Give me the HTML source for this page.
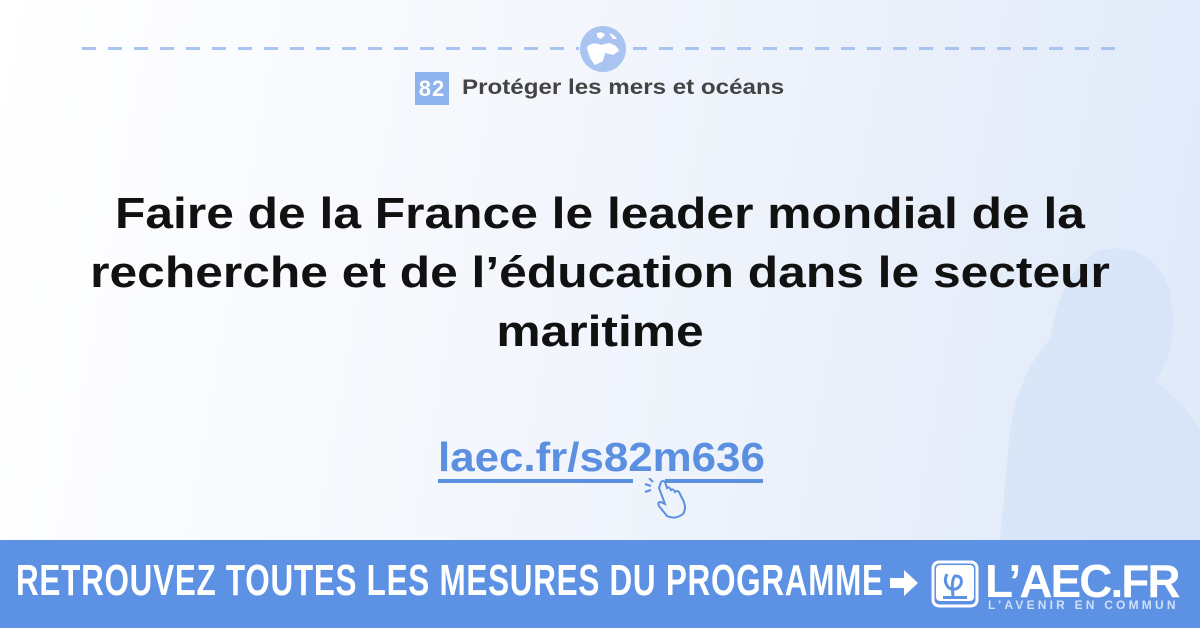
<!DOCTYPE html>
<html><head><meta charset="utf-8"><style>
*{margin:0;padding:0;box-sizing:border-box}
body{width:1200px;height:628px;overflow:hidden;position:relative;font-family:"Liberation Sans",sans-serif;background:linear-gradient(100deg,#ffffff 0%,#f3f6fc 45%,#dfe9f9 100%)}
.dash{position:absolute;top:47px;height:3px;background:repeating-linear-gradient(90deg,#a9c4f0 0 14px,transparent 14px 26px)}
.num{position:absolute;top:72px;left:415px;width:34px;height:33px;background:#8fb3ec;color:#fff;font-weight:bold;font-size:22px;text-align:center;line-height:33px;letter-spacing:1px}
.tt{position:absolute;top:76px;left:462px;font-size:21px;font-weight:bold;color:#444;transform:scaleX(1.15);transform-origin:left;white-space:nowrap}
h1{position:absolute;top:184px;left:0;width:1200px;text-align:center;font-size:44px;line-height:59px;font-weight:bold;color:#111;transform:scaleX(1.13)}
.link{position:absolute;top:434px;left:438px;font-size:41px;font-weight:bold;color:#5b8fe0;transform:scaleX(1.07);transform-origin:left;white-space:nowrap}
.ul{position:absolute;top:479px;height:4px;background:#5b8fe0}
.band{position:absolute;left:0;top:540px;width:1200px;height:88px;background:#5c91e3}
.cta{position:absolute;left:16px;top:556px;color:#fff;font-weight:bold;font-size:44px;transform:scaleX(0.715);transform-origin:left;white-space:nowrap;letter-spacing:1px}
.logo{position:absolute;left:985px;top:554px;color:#fff;font-weight:900;font-size:46px;letter-spacing:-2px;white-space:nowrap}
.sub{position:absolute;left:988px;top:598px;color:#cfe0fb;font-weight:bold;font-size:12px;letter-spacing:3.2px;white-space:nowrap}
</style></head><body>
<svg style="position:absolute;right:0;top:230px" width="260" height="310"><path d="M60 310 L70 200 Q80 140 110 110 Q120 40 160 20 Q210 10 230 60 Q240 120 215 150 Q250 180 260 200 L260 310Z" fill="#d6e3f7" opacity="0.8"/></svg>
<div class="dash" style="left:82px;width:497px"></div>
<div class="dash" style="left:633px;width:492px"></div>
<svg style="position:absolute;left:579px;top:25px" width="48" height="48" viewBox="0 0 48 48"><circle cx="24" cy="24" r="23" fill="#a9c4f0"/><path d="M18 8 Q24 6 26 10 L22 14 L18 12Z M8 22 Q14 16 22 20 L30 18 Q38 20 40 26 L34 30 L26 28 L24 36 L16 40 Q10 34 8 22Z M30 8 Q36 10 38 14 L34 14Z" fill="#fff"/></svg>
<div class="num">82</div><div class="tt">Protéger les mers et océans</div>
<h1>Faire de la France le leader mondial de la<br>recherche et de l’éducation dans le secteur<br>maritime</h1>
<div class="link">laec.fr/s82m636</div>
<div class="ul" style="left:438px;width:195px"></div>
<div class="ul" style="left:665px;width:98px"></div>
<svg style="position:absolute;left:643px;top:478px" width="46" height="42" viewBox="0 0 46 42" fill="none" stroke="#5b8fe0" stroke-width="2"><path d="M16 10 L22 26 L18 24 Q14 24 16 28 L24 38 Q32 42 40 36 Q44 30 40 22 L36 14 Q34 12 32 14 Q30 10 28 12 Q26 8 24 10 L22 4 Q20 2 18 4Z"/><path d="M2 6 L8 8 M6 0 L10 4 M2 14 L8 12"/></svg>
<div class="band"></div>
<div class="cta">RETROUVEZ TOUTES LES MESURES DU PROGRAMME</div>
<svg style="position:absolute;left:890px;top:570px" width="30" height="26"><path d="M0 8 H14 V0 L28 13 L14 26 V18 H0Z" fill="#fff"/></svg>
<svg style="position:absolute;left:931px;top:560px" width="48" height="50" viewBox="0 0 48 50"><rect x="2" y="2" width="44" height="44" rx="6" fill="none" stroke="#fff" stroke-width="3"/><rect x="5" y="5" width="38" height="36" rx="4" fill="#fff"/><path d="M16 14 Q12 22 18 28 Q26 32 30 24 Q32 16 24 16 Q20 20 22 36" fill="none" stroke="#5c91e3" stroke-width="3"/><rect x="12" y="36" width="24" height="3" fill="#5c91e3"/></svg>
<div class="logo">L’AEC.FR</div>
<div class="sub">L’AVENIR EN COMMUN</div>
</body></html>
